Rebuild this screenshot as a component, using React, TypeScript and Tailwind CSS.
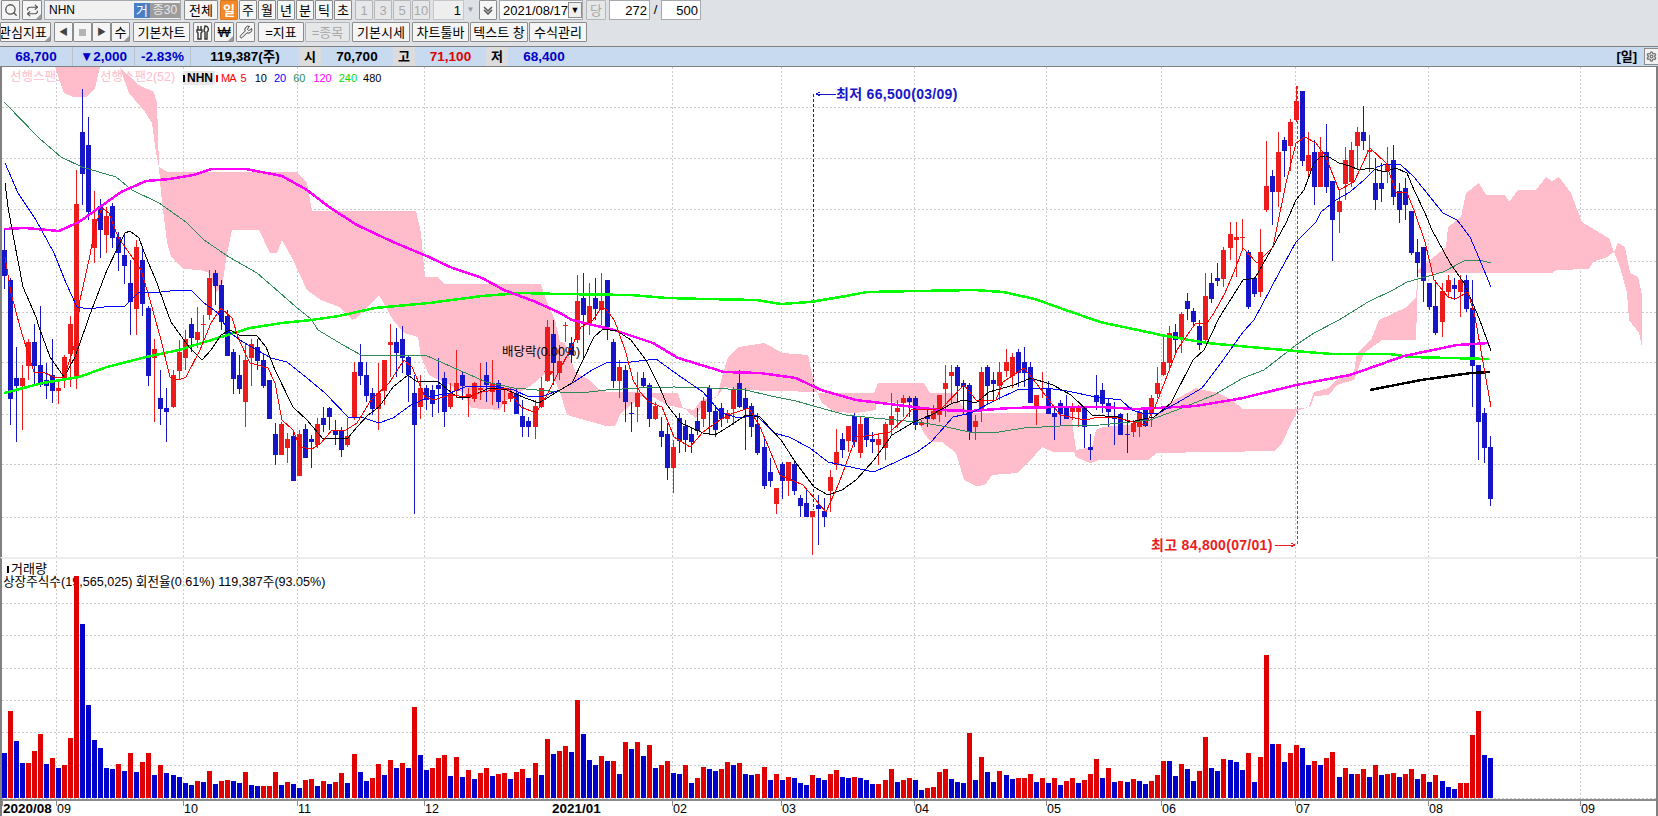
import React from "react";
import { Search, Repeat, Wrench, Settings } from "lucide-react";

const V: number[] = [-591,465,-555,-621,621,585,534,-624,606,-636,627,546,60,-204,-447,-552,-576,-636,-639,624,-645,591,-648,618,591,-657,627,-651,-657,-663,-681,-687,675,-678,645,-684,675,672,-675,-681,648,-687,-690,690,690,648,-687,678,-684,-696,672,669,-690,675,-684,678,651,-681,594,-648,-675,666,624,-657,612,-636,621,-636,453,-597,-642,636,606,597,-660,603,-663,642,-669,651,636,-660,654,651,-669,648,639,-666,621,-657,549,-594,585,570,-588,432,-534,-612,-627,600,-615,615,-654,558,-579,558,-600,567,-636,627,615,-651,-654,627,-681,666,633,-639,-645,639,618,-627,621,-654,-657,654,633,-672,654,-672,663,-666,-681,-687,657,-666,-672,654,642,-663,-666,663,-666,-672,-684,684,672,639,-678,672,666,-672,-702,696,693,648,639,-669,-678,-681,531,-672,603,-648,-678,645,-657,-669,666,666,654,-678,666,-681,666,-687,675,666,-681,672,654,609,-666,636,-678,675,-678,669,-675,-684,675,657,615,-615,-660,624,-639,-675,645,543,-636,-645,609,-612,-618,-642,591,-678,603,297,-564,564,-618,591,567,-576,-627,615,-627,606,588,-663,636,-654,654,639,-663,627,-657,654,651,-663,654,639,-669,654,-678,657,-675,-693,-699,681,681,537,465,-597,-606];

type C = [string, number, number, number, number];
const K: C[] = [
["b",250,276,230,289],["b",280,399,278,425],["b",378,386,347,442],["r",378,386,365,430],["r",342,366,339,380],["b",342,366,324,385],["b",365,385,306,387],["b",380,386,363,399],["b",375,391,339,403],["r",388,391,380,404],["r",357,378,355,388],["r",324,354,316,387],["r",204,376,170,389],["b",132,174,89,205],["b",145,212,117,220],["r",219,248,191,263],["b",206,230,199,258],["r",216,235,207,253],["b",206,238,203,248],["b",237,253,232,271],["b",255,266,233,284],["b",283,302,260,335],["r",247,309,240,335],["b",260,304,247,316],["b",308,376,306,386],["r",349,358,339,422],["b",398,409,370,425],["b",408,412,388,442],["r",375,407,370,408],["r",352,371,340,380],["r",339,358,330,370],["b",324,338,318,352],["r",332,340,307,348],["r",324,325,315,340],["r",278,315,270,320],["b",273,286,270,305],["b",285,322,280,330],["b",316,356,310,356],["b",352,379,349,394],["b",375,389,355,394],["r",360,402,343,427],["r",344,358,339,386],["b",347,361,339,370],["b",360,386,353,388],["b",380,419,380,419],["b",434,455,423,465],["r",424,455,422,455],["r",439,448,433,463],["b",436,481,430,481],["r",434,476,430,476],["b",429,458,424,458],["b",439,442,435,468],["r",424,445,418,448],["b",418,425,407,432],["b",408,417,407,430],["b",431,435,420,445],["b",431,450,427,457],["r",436,445,418,447],["r",372,417,362,420],["b",362,376,344,385],["b",375,396,362,402],["b",393,409,388,415],["r",393,409,363,430],["r",360,391,360,405],["r",342,345,324,377],["b",342,353,328,377],["b",339,358,326,373],["b",357,375,355,402],["b",393,425,375,514],["r",388,407,375,419],["b",388,400,385,410],["b",390,404,385,417],["b",385,389,358,413],["b",378,412,372,427],["r",393,407,383,409],["r",383,391,350,398],["b",375,386,372,400],["r",394,398,388,417],["r",383,399,382,402],["r",388,390,363,400],["b",375,385,362,402],["r",383,392,360,405],["b",383,402,380,408],["r",401,404,388,412],["r",393,399,388,402],["b",393,414,388,414],["b",416,427,400,437],["b",421,427,417,437],["r",406,427,400,439],["r",388,407,377,408],["r",327,381,320,382],["b",334,363,320,385],
["r",361,373,345,380],["r",325,326,322,342],["b",343,355,337,363],["r",301,340,275,343],["b",298,315,273,358],["r",306,325,283,335],["b",298,309,278,320],["r",301,310,273,325],["b",280,327,280,340],["b",342,381,339,388],["r",367,381,360,398],["b",370,402,365,422],["b",413,414,402,432],["r",393,407,372,422],["b",378,386,372,387],["b",385,419,383,427],["r",406,419,402,420],["b",431,437,417,447],["b",434,468,423,480],["r",447,468,440,493],["b",418,441,413,453],["b",426,440,420,452],["b",434,442,427,453],["b",421,431,408,435],["r",401,419,397,427],["b",388,412,385,435],["b",411,430,405,437],["b",408,419,403,427],["r",413,419,410,423],["r",390,409,387,425],["b",383,407,370,408],["b",398,409,388,450],["b",406,427,403,437],["b",424,453,413,455],["b",447,486,437,489],["b",472,481,458,487],["r",488,504,488,514],["b",464,481,462,499],["r",462,481,462,496],["b",464,491,462,495],["b",498,506,495,517],["b",503,517,488,517],["r",511,517,511,555],["b",505,509,495,545],["b",511,517,498,527],["r",477,491,470,512],["r",452,465,429,470],["b",439,450,433,458],["r",426,441,426,452],["b",416,442,413,447],["r",424,453,417,458],["b",418,440,417,447],["b",439,442,432,453],["r",439,445,433,465],["r",424,448,422,460],["r",416,425,393,435],["r",408,412,400,428],["r",398,403,395,417],["b",398,402,396,417],["b",398,425,396,430],["r",422,425,420,426],["b",416,419,408,427],["r",411,419,405,420],["r",395,415,395,422],["r",383,389,365,417],["r",372,376,365,403],["b",367,386,365,403],["b",383,387,380,415],["b",385,432,383,440],["r",421,427,415,440],["r",372,410,367,422],["b",367,386,365,405],["b",380,384,372,400],["r",372,386,362,400],["r",362,371,349,377],["r",357,376,353,388],["b",352,373,349,387],["b",362,373,347,387],["b",367,403,362,403],["r",395,406,395,425],["r",388,389,372,398],["b",388,414,381,414],["b",413,417,407,440],["b",403,414,400,425],["b",407,419,395,419],["r",407,412,403,420],["r",408,412,405,427],["b",408,427,407,448],["b",447,450,434,460],["b",395,402,375,410],["b",390,404,383,413],["b",403,412,398,427],["b",416,419,402,445],["b",414,435,413,435],["b",434,435,413,453],["r",423,432,420,437],["r",412,427,410,437],["b",410,426,410,427],["r",398,413,395,427],["r",383,394,367,398],["r",362,375,337,376],["r",333,363,326,370],["b",332,340,324,353],["r",314,339,312,353],["b",301,309,293,320],["b",311,322,308,325],["b",326,345,320,350],["r",296,340,273,342],["b",283,299,273,303],["b",278,281,263,286],["r",250,279,247,287],["r",234,248,222,260],["r",237,240,222,277],["r",237,238,219,250],["b",252,307,250,309],["b",278,294,277,297],["r",252,292,229,297],["r",186,210,141,212],["b",176,192,170,225],["r",152,192,132,207],["b",140,151,137,177],["r",122,146,119,171],["r",101,120,86,122],["b",91,161,91,166],["r",155,171,132,177],["b",152,187,140,205],["r",152,187,137,187],["b",152,187,124,193],["b",181,220,181,261],["r",201,212,190,233],["r",160,184,147,200],["r",150,182,142,187],["r",132,146,127,170],["b",132,141,106,150],["r",150,152,135,172],["b",183,200,158,210],["b",183,189,163,202],["r",164,171,147,183],["b",160,197,145,205],["b",191,210,183,223],["b",188,205,178,220],["b",211,253,211,255],["b",252,263,239,277],["b",247,281,247,302],["b",283,307,283,310],["b",306,333,280,335],["r",291,322,283,337],["r",280,292,275,297],["b",285,289,278,300],["r",280,292,275,317],["b",280,309,275,312],["b",308,366,280,407],["b",365,422,365,460],["b",413,448,408,463],["b",447,499,436,506],
];

const anchors: [number, number][] = [[0,4.6],[91,553.6],[123,746.4],[184,1115.4],[246,1491]];
function cx(i: number): number {
  for (let a = 0; a < anchors.length - 1; a++) {
    const [i0, x0] = anchors[a];
    const [i1, x1] = anchors[a + 1];
    if (i <= i1) return x0 + ((i - i0) * (x1 - x0)) / (i1 - i0);
  }
  return 0;
}
const left = (i: number) => Math.floor(cx(i) - 2.5);

const RED = "#ed1c1c";
const BLUE = "#1616c8";

const LINES: { c: string; w: number; p: string }[] = [
  { c: "#2e8b57", w: 1, p: "4,102 39,138 61,157 82,167 116,177 132,190 159,203 186,222 204,240 229,257 257,273 279,292 296,307 311,319 318,330 343,345 361,355 425,355 443,363 486,382 514,388 560,392 581,393 606,390 639,388 674,387 710,388 746,390 771,396 796,401 817,407 846,415 874,418 917,422 942,426 974,433 999,432 1024,428 1060,426 1100,425 1150,420 1182,408 1214,395 1243,378 1264,370 1296,345 1314,333 1339,320 1368,302 1393,290 1407,282 1443,272 1464,261 1479,260 1491,263" },
  { c: "#00ff00", w: 2.5, p: "4,393 43,383 79,377 107,367 146,357 179,350 221,337 250,328 282,323 311,320 339,316 375,308 429,303 482,296 521,293 560,294 631,295 667,298 706,299 756,300 781,304 810,302 846,296 867,292 917,291 974,290 1003,292 1035,299 1060,308 1100,322 1161,335 1207,343 1250,347 1307,352 1332,354 1389,354 1411,357 1489,359" },
  { c: "#ff00ff", w: 2.5, p: "4,229 25,228 59,231 79,222 100,207 121,192 146,181 170,179 193,175 212,169 246,169 282,176 307,190 329,207 357,225 393,242 429,257 450,267 482,278 504,290 536,302 560,313 572,320 614,330 653,343 678,358 724,372 760,373 796,378 821,390 856,400 889,404 939,410 971,411 1010,408 1060,407 1100,407 1136,409 1196,406 1243,398 1296,385 1350,375 1404,356 1457,345 1489,343" },
  { c: "#000000", w: 2.5, p: "1370,390 1421,380 1471,373 1490,372" },
  { c: "#0000ff", w: 1, p: "5,163 18,193 36,220 54,253 66,283 77,307 89,309 104,307 125,306 139,292 161,292 179,290 191,290 204,303 218,313 229,332 243,342 271,358 287,362 307,378 325,393 348,417 361,417 379,423 393,418 411,405 429,397 450,393 468,386 493,386 514,390 529,397 543,396 560,390 574,382 592,370 606,363 631,362 656,359 681,377 703,392 721,413 739,418 756,415 774,433 789,437 810,448 828,462 846,466 874,472 896,462 917,452 931,442 953,417 971,413 996,400 1017,390 1046,388 1067,391 1096,397 1121,400 1132,410 1145,414 1159,413 1182,400 1202,388 1221,363 1243,332 1254,320 1279,273 1296,242 1316,222 1321,212 1336,200 1350,192 1364,180 1377,167 1386,164 1400,164 1414,177 1443,213 1457,220 1470,237 1479,258 1491,287" },
  { c: "#000000", w: 1, p: "5,183 8,207 14,240 23,287 36,317 39,327 50,357 64,377 75,357 87,323 89,317 107,270 118,247 125,233 130,231 139,238 146,257 157,283 164,303 171,322 189,347 202,360 211,350 221,335 230,330 239,335 257,336 266,347 275,370 293,407 307,420 318,433 323,439 339,438 348,438 357,427 368,415 379,407 393,387 408,375 416,381 437,381 457,397 470,397 489,388 507,390 525,398 539,403 560,390 572,383 583,360 594,337 603,329 617,331 631,340 646,360 660,388 667,405 681,423 703,433 715,435 728,427 746,415 760,417 781,440 796,463 814,487 828,495 842,490 856,480 874,460 892,435 914,422 931,415 953,403 964,400 976,403 989,392 1014,385 1031,378 1053,385 1071,395 1092,415 1118,417 1130,422 1154,417 1171,403 1193,360 1204,350 1219,318 1243,280 1255,278 1271,250 1286,223 1296,200 1304,190 1314,163 1321,156 1329,157 1339,163 1350,166 1359,170 1371,168 1384,172 1396,168 1407,173 1414,190 1425,213 1432,230 1450,263 1464,283 1479,318 1491,351" },
  { c: "#ff0000", w: 1, p: "5,257 11,293 20,327 27,350 34,372 43,372 54,377 64,378 77,337 80,300 89,260 96,223 102,208 109,213 118,237 132,257 141,270 150,300 161,340 170,377 179,380 186,377 200,350 211,323 221,308 232,318 239,340 250,363 268,368 275,383 282,420 293,430 300,447 312,449 321,443 332,430 346,430 357,423 371,400 389,383 404,360 412,367 425,397 434,400 450,395 468,397 482,392 507,388 521,407 536,413 546,397 557,375 571,348 581,327 593,320 601,308 606,309 614,320 617,327 626,353 633,380 640,392 649,402 662,407 674,437 690,447 703,432 717,422 728,415 749,408 760,427 771,453 780,475 803,485 826,512 839,483 856,437 874,435 890,432 906,417 912,409 931,410 942,408 964,385 976,400 996,400 1003,382 1024,368 1040,388 1060,415 1085,420 1099,417 1118,418 1145,425 1155,407 1177,350 1195,324 1207,323 1214,313 1225,293 1236,267 1243,248 1257,263 1273,247 1286,183 1296,143 1305,137 1316,143 1325,155 1339,190 1354,182 1370,148 1386,163 1396,192 1407,193 1414,210 1425,242 1434,280 1448,297 1455,299 1468,292 1475,317 1491,407" },
];

const CLOUD = [
  "55,67 64,93 73,97 86,97 95,88 100,67",
  "120,68 128,75 139,85 154,92 157,103 159,167 168,172 296,172 307,183 312,211 416,211 421,233 425,277 437,277 445,284 541,284 546,300 555,320 560,342 565,343 569,355 576,373 590,380 597,388 606,392 678,393 683,408 694,410 701,400 717,397 722,377 728,357 739,347 764,343 783,353 808,355 814,383 818,393 874,393 878,383 924,383 930,393 953,393 964,408 971,413 1071,413 1076,450 1092,447 1096,430 1103,427 1146,423 1171,402 1196,388 1204,390 1218,393 1232,400 1243,409 1296,409 1309,407 1314,392 1318,391 1329,388 1336,380 1354,372 1357,353 1371,340 1379,320 1407,307 1416,297 1418,270 1446,247 1448,227 1461,217 1466,193 1479,183 1486,195 1505,195 1509,202 1518,190 1536,190 1546,177 1552,181 1559,177 1571,193 1582,222 1600,233 1609,238 1614,252 1607,257 1593,262 1589,269 1557,270 1552,273 1418,273 1416,340 1382,340 1364,353 1354,380 1337,385 1329,395 1314,396 1311,406 1297,411 1293,420 1282,443 1275,451 1157,453 1148,460 1100,460 1090,463 1076,457 1074,452 1053,452 1042,447 1028,463 1017,473 992,475 985,485 976,486 964,480 956,453 942,442 931,442 924,433 917,418 912,403 876,402 876,410 856,413 835,412 822,403 817,392 739,390 724,387 717,397 703,402 696,418 685,409 667,405 646,393 621,413 615,426 606,426 567,415 560,392 550,370 529,387 504,402 500,410 471,408 464,393 446,383 429,375 421,357 418,337 404,333 393,320 379,295 357,318 352,320 339,307 321,300 307,290 293,260 282,240 277,253 270,253 259,230 232,230 226,260 222,287 216,292 209,273 200,270 184,269 171,257 167,242 161,193 159,167 156,153 152,123 145,112 129,93",
  "1614,252 1618,243 1625,247 1630,273 1638,277 1642,295 1642,347 1639,333 1629,320 1627,293 1620,267",
];

const H1 = [107, 158, 209, 261, 312, 362, 414, 464, 517];
const H2 = [603, 635, 668, 700, 732, 765, 798];
const VG = [56, 183, 297, 424, 672, 781, 914, 1046, 1161, 1295, 1428, 1580];
const LABELS: [string, number][] = [["09",57],["10",184],["11",298],["12",425],["02",673],["03",782],["04",915],["05",1047],["06",1162],["07",1296],["08",1429],["09",1581]];

function Btn({ w, children, active, disabled, corner, className }: { w: string; children?: React.ReactNode; active?: boolean; disabled?: boolean; corner?: boolean; className?: string }) {
  return (
    <div
      className={`relative h-[20px] ${w} shrink-0 flex items-center justify-center overflow-hidden rounded-[1px] border text-[13px] leading-none ${
        active
          ? "border-[#d97a1e] bg-[#f28a2a] text-white font-bold"
          : disabled
          ? "border-[#b4b6b9] bg-[#e6e7e9] text-[#a8a8a8]"
          : "border-[#8c8c8c] bg-[#f5f5f5] text-black"
      } ${className ?? ""}`}
    >
      {children}
      {corner && <span className="absolute bottom-0 right-0 h-0 w-0 border-b-[5px] border-l-[5px] border-b-[#9a9a9a] border-l-transparent" />}
    </div>
  );
}

function Cell({ w, children, className }: { w: string; children: React.ReactNode; className?: string }) {
  return <div className={`${w} h-full shrink-0 flex items-center justify-center border-r border-[#b9c3cf] ${className ?? ""}`}>{children}</div>;
}

function Tag({ w, children }: { w: string; children: React.ReactNode }) {
  return <div className={`${w} h-full shrink-0 flex items-center justify-center bg-[#dcdcdc] text-[13px] font-bold text-black`}>{children}</div>;
}

function Field({ w, children, className }: { w: string; children: React.ReactNode; className?: string }) {
  return <div className={`h-[20px] ${w} shrink-0 flex items-center border border-[#a6a9ad] bg-white text-[13px] leading-none text-black ${className ?? ""}`}>{children}</div>;
}

export default function App() {
  return (
    <div className="w-[1658px] h-[816px] overflow-hidden bg-[#dee1e6] font-[family-name:'Liberation_Sans','Noto_Sans_CJK_KR',sans-serif] text-black">
      {/* row 1 */}
      <div className="h-[21px] flex items-start pl-[1px] pt-[0px]">
        <Btn w="w-[19px]"><Search size={14} strokeWidth={2.2} className="text-[#555]" /></Btn>
        <Btn w="w-[20px]" className="ml-[2px]" corner><Repeat size={13} strokeWidth={2.2} className="text-[#555]" /></Btn>
        <div className="ml-[2px] h-[20px] w-[137px] flex items-center border border-[#a6a9ad] bg-[#f1f1f1] pl-[4px] text-[12px]">
          <span className="flex-1">NHN</span>
          <span className="h-[15px] w-[16px] flex items-center justify-center bg-[#4a7fc6] text-[13px] leading-none text-white">거</span>
          <span className="h-[15px] w-[30px] flex items-center justify-center bg-[#9c9c9c] text-[12px] leading-none text-[#e8e8e8]">종30</span>
        </div>
        <Btn w="w-[34px]" className="ml-[3px]">전체</Btn>
        <Btn w="w-[18px]" className="ml-[2px]" active>일</Btn>
        <div className="ml-[1px] flex gap-[1px]">
          <Btn w="w-[18px]">주</Btn>
          <Btn w="w-[18px]">월</Btn>
          <Btn w="w-[18px]">년</Btn>
          <Btn w="w-[18px]">분</Btn>
          <Btn w="w-[18px]">틱</Btn>
          <Btn w="w-[18px]">초</Btn>
        </div>
        <div className="ml-[3px] flex gap-[1px]">
          <Btn w="w-[18px]" disabled>1</Btn>
          <Btn w="w-[18px]" disabled>3</Btn>
          <Btn w="w-[18px]" disabled>5</Btn>
          <Btn w="w-[18px]" disabled>10</Btn>
        </div>
        <div className="ml-[3px] h-[20px] w-[31px] flex items-center justify-end border border-[#c4c6c9] bg-[#eeeeee] pr-[2px] text-[13px] leading-none text-black">1</div>
        <div className="h-[20px] w-[13px] flex items-center justify-center text-[8px] text-[#9a9a9a]">▼</div>
        <Btn w="w-[18px]" className="ml-[2px] text-[#555]"><svg width="10" height="9" viewBox="0 0 10 9"><path d="M1 1l4 4 4-4M1 4l4 4 4-4" fill="none" stroke="#555" strokeWidth="1.5" /></svg></Btn>
        <Field w="w-[84px]" className="ml-[2px] pl-[3px] text-[12.5px]">
          <span className="flex-1">2021/08/17</span>
          <span className="h-[16px] w-[16px] flex items-center justify-center border border-[#8c8c8c] bg-[#f0f0f0] text-[9px]">▼</span>
        </Field>
        <Btn w="w-[20px]" className="ml-[3px]" disabled>당</Btn>
        <Field w="w-[41px]" className="ml-[3px] justify-end pr-[2px]">272</Field>
        <span className="w-[11px] text-center text-[13px] leading-[20px]">/</span>
        <Field w="w-[40px]" className="justify-end pr-[2px]">500</Field>
      </div>
      {/* row 2 */}
      <div className="h-[21px] flex items-start pt-[1px]">
        <Btn w="w-[51px]" corner className="justify-start whitespace-nowrap"><span className="-ml-[2px]">관심지표</span></Btn>
        <div className="ml-[3px] flex">
          <Btn w="w-[19px]"><span className="text-[9px] text-[#444]">◀</span></Btn>
          <Btn w="w-[19px]"><span className="h-[7px] w-[7px] bg-[#b4b4b4]" /></Btn>
          <Btn w="w-[19px]"><span className="text-[9px] text-[#444]">▶</span></Btn>
          <Btn w="w-[19px]" corner>수</Btn>
        </div>
        <Btn w="w-[57px]" className="ml-[3px]">기본차트</Btn>
        <Btn w="w-[19px]" className="ml-[3px]"><svg width="15" height="15" viewBox="0 0 15 15" fill="none" stroke="#333" strokeWidth="1.4"><path d="M3 1v4M6 1v4M2 5h5v2l-1 1v6H3V8L2 7z" /><path d="M10 1c3 0 4 3 3 5l-1 1v7h-2V7L9 6z" /></svg></Btn>
        <Btn w="w-[20px]" className="ml-[2px] text-[14px]" corner>₩</Btn>
        <Btn w="w-[19px]" className="ml-[2px]"><Wrench size={14} strokeWidth={1.6} className="text-[#333]" /></Btn>
        <Btn w="w-[46px]" className="ml-[3px]">=지표</Btn>
        <Btn w="w-[45px]" className="ml-[1px]" disabled>=종목</Btn>
        <Btn w="w-[58px]" className="ml-[2px]">기본시세</Btn>
        <Btn w="w-[57px]" className="ml-[2px]">차트툴바</Btn>
        <Btn w="w-[58px]" className="ml-[1px]">텍스트 창</Btn>
        <Btn w="w-[58px]" className="ml-[1px]">수식관리</Btn>
      </div>
      <div className="h-[4px]" />
      {/* info bar */}
      <div className="h-[21px] flex items-stretch border-y border-[#808080] bg-[#c8daf0] text-[13.5px] font-bold leading-none">
        <Cell w="w-[73px]" className="text-[#0000c8]">68,700</Cell>
        <Cell w="w-[62px]" className="text-[#0000c8]">▼2,000</Cell>
        <Cell w="w-[56px]" className="text-[#0000c8]">-2.83%</Cell>
        <div className="w-[108px] shrink-0 flex items-center justify-center">119,387(주)</div>
        <Tag w="w-[22px]">시</Tag>
        <div className="w-[72px] shrink-0 flex items-center justify-center">70,700</div>
        <Tag w="w-[22px]">고</Tag>
        <div className="w-[71px] shrink-0 flex items-center justify-center text-[#e00000]">71,100</div>
        <Tag w="w-[22px]">저</Tag>
        <div className="w-[72px] shrink-0 flex items-center justify-center text-[#0000c8]">68,400</div>
        <div className="flex-1" />
        <span className="self-center mr-[7px] text-[13px]">[일]</span>
        <div className="mr-[-1px] my-[1px] w-[15px] flex items-center justify-center border border-[#8c8c8c] bg-[#f2f2f2]"><Settings size={11} className="text-[#777]" strokeWidth={3} /></div>
      </div>
      {/* price pane */}
      <div className="relative h-[490px] w-full overflow-hidden border-l-2 border-r-2 border-[#808080] bg-white">
        <svg className="absolute left-[-2px] top-0" width="1658" height="490" viewBox="0 67 1658 490" shapeRendering="crispEdges">
          {H1.map((y) => <line key={y} x1="2" x2="1656" y1={y + 0.5} y2={y + 0.5} stroke="#cccccc" strokeDasharray="2 2" />)}
          {VG.map((x) => <line key={x} x1={x + 0.5} x2={x + 0.5} y1="67" y2="557" stroke="#cccccc" strokeDasharray="2 2" />)}
          {CLOUD.map((p, i) => <polygon key={i} points={p} fill="#ffbccb" />)}
          <line x1="813.5" x2="813.5" y1="94" y2="510" stroke="#1616c8" strokeDasharray="3 2" />
          <line x1="1297.5" x2="1297.5" y1="86" y2="546" stroke={RED} strokeDasharray="3 2" />
          {K.map(([c, t, b, h, l], i) => {
            const f = c === "r" ? RED : BLUE;
            const x = left(i);
            return (
              <g key={i} fill={f}>
                <rect x={x + 2} y={h} width="1" height={Math.max(l - h, 1)} />
                <rect x={x} y={t} width="5" height={Math.max(b - t, 1)} />
              </g>
            );
          })}
          {LINES.map((l, i) => <polyline key={i} points={l.p} fill="none" stroke={l.c} strokeWidth={l.w} />)}
          <path d="M543 371h11l-5 6z" fill={RED} />
          <path d="M816 94h20M816 94l4-2M816 94l4 2" stroke="#1616c8" fill="none" />
          <path d="M1275 545h20M1295 545l-4-2M1295 545l-4 2" stroke={RED} fill="none" />
        </svg>
        <span className="absolute left-[8px] top-[3px] whitespace-nowrap text-[12.5px] leading-[14px] text-[#ffbccb]">선행스팬1(26)</span>
        <span className="absolute left-[98px] top-[3px] whitespace-nowrap text-[12.5px] leading-[14px] text-[#ffbccb]">선행스팬2(52)</span>
        <div className="absolute left-[181px] top-[4px] flex items-center whitespace-nowrap text-[11px] leading-[14px]">
          <span className="mr-[1px] flex h-[14px] w-[32px] items-center bg-[#e8e8e8] text-[12px] font-bold"><span className="mr-[2px] h-[7px] w-[2px] bg-black" />NHN</span>
          <span className="mr-[5px] flex items-center tracking-[-1px] text-[#ff0000]"><span className="mr-[3px] h-[7px] w-[2px] bg-[#ff0000]" />MA</span>
          <span className="mr-[8px] text-[#ff0000]">5</span>
          <span className="mr-[7px]">10</span>
          <span className="mr-[7px] text-[#0000ff]">20</span>
          <span className="mr-[8px] text-[#2e8b57]">60</span>
          <span className="mr-[7px] text-[#ff00ff]">120</span>
          <span className="mr-[6px] text-[#00e000]">240</span>
          <span>480</span>
        </div>
        <span className="absolute left-[500px] top-[278px] whitespace-nowrap text-[12.5px] leading-[14px]">배당락(0.00%)</span>
        <span className="absolute left-[834px] top-[20px] whitespace-nowrap text-[14px] font-bold leading-[14px] tracking-[0.3px] text-[#1616c8]">최저 66,500(03/09)</span>
        <span className="absolute left-[1149px] top-[471px] whitespace-nowrap text-[14px] font-bold leading-[14px] tracking-[0.3px] text-[#ed1c1c]">최고 84,800(07/01)</span>
      </div>
      {/* volume pane */}
      <div className="relative h-[259px] w-full overflow-hidden border-l-2 border-r-2 border-t-2 border-l-[#808080] border-r-[#808080] border-t-[#ececec] bg-white">
        <span className="absolute left-[5px] top-[3px] flex items-center whitespace-nowrap text-[13px] leading-[14px]"><span className="mr-[2px] h-[7px] w-[2px] bg-black" />거래량</span>
        <span className="absolute left-[1px] top-[16px] whitespace-nowrap text-[12.6px] leading-[14px]">상장주식수(19,565,025) 회전율(0.61%) 119,387주(93.05%)</span>
        <svg className="absolute left-[-2px] top-[-2px]" width="1658" height="259" viewBox="0 557 1658 259" shapeRendering="crispEdges">
          {H2.map((y) => <line key={y} x1="2" x2="1656" y1={y + 0.5} y2={y + 0.5} stroke="#cccccc" strokeDasharray="2 2" />)}
          {VG.map((x) => <line key={x} x1={x + 0.5} x2={x + 0.5} y1="557" y2="799" stroke="#cccccc" strokeDasharray="2 2" />)}
          {V.map((v, i) => {
            const t = 556 + Math.abs(v) / 3;
            return <rect key={i} x={left(i)} y={t} width="5" height={798 - t} fill={v > 0 ? "#e00000" : "#0000cc"} />;
          })}
          <rect x="0" y="799" width="1658" height="2" fill="#8c8c8c" />
          {VG.map((x) => <rect key={x} x={x} y="800" width="1" height="6" fill="#8c8c8c" />)}
          <rect x="2" y="800" width="1" height="6" fill="#8c8c8c" />
        </svg>
        <span className="absolute left-[1px] top-[243px] whitespace-nowrap text-[13.5px] font-bold leading-[14px]">2020/08</span>
        <span className="absolute left-[550px] top-[243px] whitespace-nowrap text-[13.5px] font-bold leading-[14px]">2021/01</span>
        {LABELS.map(([t, x]) => (
          <span key={x} className="absolute top-[243px] text-[12.5px] leading-[14px]" style={{ left: x - 2 }}>{t}</span>
        ))}
      </div>
    </div>
  );
}
